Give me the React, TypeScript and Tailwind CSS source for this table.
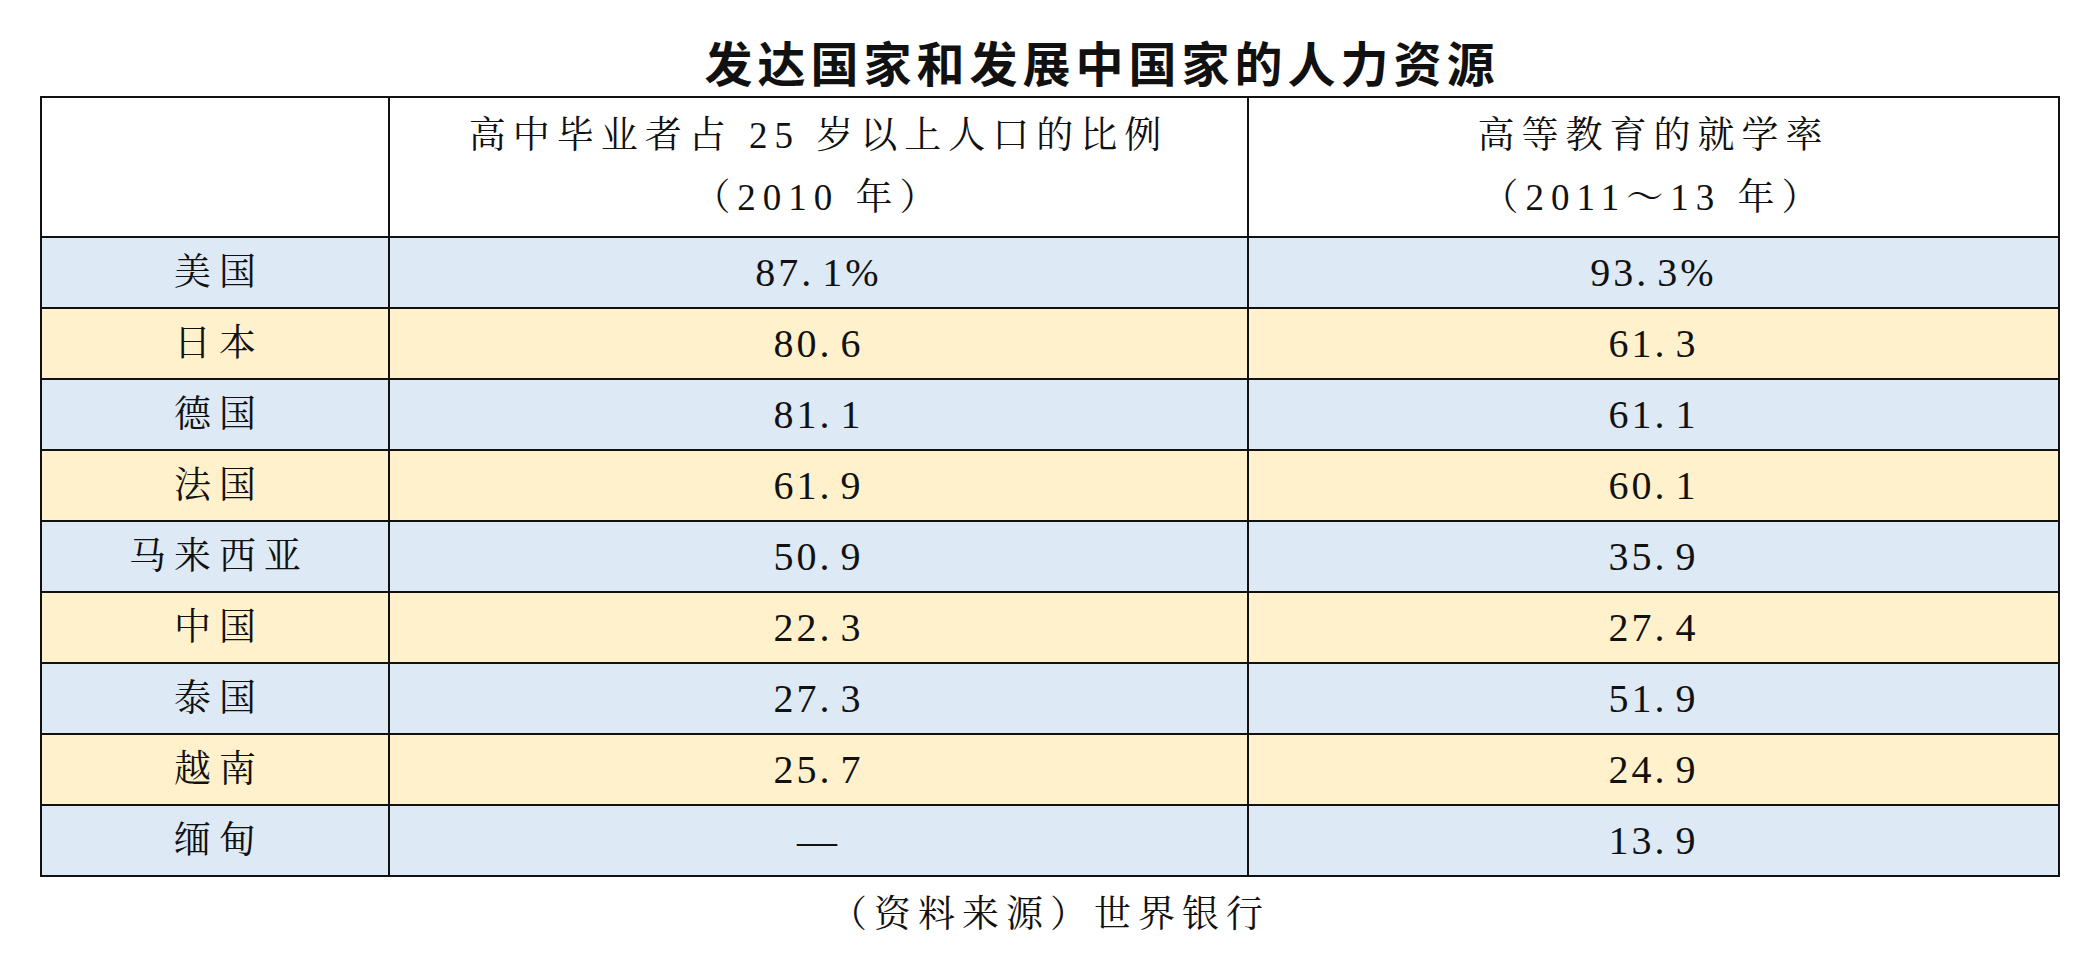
import React from 'react';

const rows = [
  { name: '美国', a: '87.1%', b: '93.3%' },
  { name: '日本', a: '80.6', b: '61.3' },
  { name: '德国', a: '81.1', b: '61.1' },
  { name: '法国', a: '61.9', b: '60.1' },
  { name: '马来西亚', a: '50.9', b: '35.9' },
  { name: '中国', a: '22.3', b: '27.4' },
  { name: '泰国', a: '27.3', b: '51.9' },
  { name: '越南', a: '25.7', b: '24.9' },
  { name: '缅甸', a: '—', b: '13.9' },
];

const Num = ({ v }: { v: string }) => {
  const [int, dec] = v.split('.');
  if (dec === undefined) return <>{v}</>;
  return (
    <>
      {int}
      <span className="pr-[8px]">.</span>
      {dec}
    </>
  );
};

const App = () => {
  return (
    <div className="min-h-screen w-full bg-white text-[#111] [font-family:Liberation_Serif,Noto_Serif_CJK_SC,Noto_Sans_CJK_SC,serif]">
      {/* Title */}
      <div className="flex justify-center pt-[26px] pl-[104px]">
        <h1 className="h-[70px] leading-[70px] text-[48px] font-bold tracking-[5px] [font-family:Noto_Sans_CJK_SC,sans-serif]">
          发达国家和发展中国家的人力资源
        </h1>
      </div>

      {/* Table */}
      <table className="ml-[40px] w-[2018px] border-collapse border-2 border-[#111] table-fixed">
        <colgroup>
          <col className="w-[348px]" />
          <col className="w-[859px]" />
          <col className="w-[811px]" />
        </colgroup>
        <thead>
          <tr className="bg-white">
            <th className="h-[140px] border-2 border-[#111]"></th>
            <th className="h-[140px] border-2 border-[#111] text-[37px] font-normal leading-[62px] tracking-[7px]">
              <div>高中毕业者占 25 岁以上人口的比例</div>
              <div>（2010 年）</div>
            </th>
            <th className="h-[140px] border-2 border-[#111] text-[37px] font-normal leading-[62px] tracking-[7px]">
              <div>高等教育的就学率</div>
              <div>（2011～13 年）</div>
            </th>
          </tr>
        </thead>
        <tbody>
          {rows.map((r, i) => (
            <tr key={r.name} className={i % 2 === 0 ? 'bg-[#dde9f5]' : 'bg-[#fff1cc]'}>
              <td className="h-[71px] border-2 border-[#111] text-center text-[37px] tracking-[8px] pl-[8px]">{r.name}</td>
              <td className="h-[71px] border-2 border-[#111] text-center text-[40px] tracking-[3px]"><Num v={r.a} /></td>
              <td className="h-[71px] border-2 border-[#111] text-center text-[40px] tracking-[3px]"><Num v={r.b} /></td>
            </tr>
          ))}
        </tbody>
      </table>

      {/* Source */}
      <p className="mt-[16px] text-center text-[37px] tracking-[7px] leading-[44px]">（资料来源）世界银行</p>
    </div>
  );
};

export default App;
